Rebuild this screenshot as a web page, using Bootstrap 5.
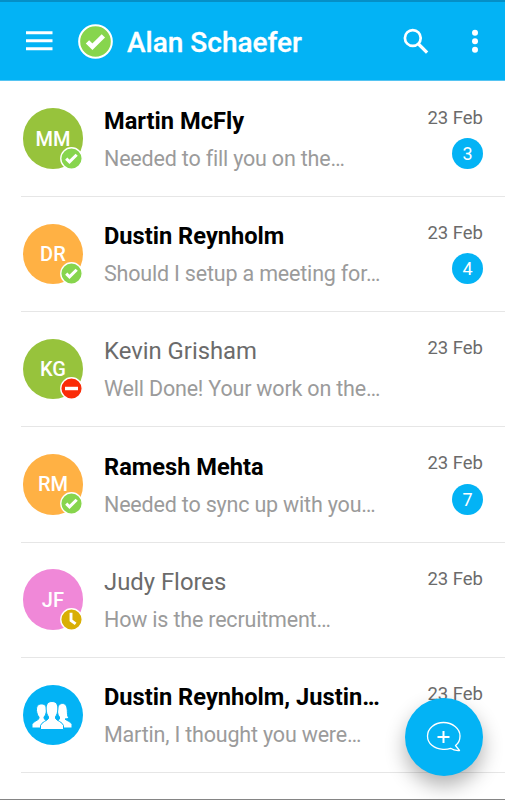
<!DOCTYPE html>
<html lang="en">
<head>
<meta charset="utf-8">
<meta name="viewport" content="width=device-width, initial-scale=1">
<title>Messages</title>
<link href="https://cdn.jsdelivr.net/npm/bootstrap@5.3.0/dist/css/bootstrap.min.css" rel="stylesheet">
<style>
:root{--sky:#03b3f5}
body{font-family:Roboto,"Noto Sans",sans-serif;background:#fff}
svg{display:block;flex:none}
.screen{width:505px;height:800px;border-bottom:1px solid #858585}
.topbar{height:81px;background:var(--sky);border-top:2px solid #058fc6;border-bottom:1px solid #55c4f2;padding:0 18px 0 26px}
.topbar h1{font-size:28px;font-weight:500;line-height:34px;letter-spacing:0;margin:4px 0 0 14px;-webkit-text-stroke:.3px #fff}
.status{margin:1px 0 0 25px}
.more{margin-left:34px}
.chats{padding-top:.6px}
.chat{height:115.25px;padding:0 22px 0 .5px;margin-left:21px;border-bottom:1px solid #e6e6e6}
.avatar{width:60.5px;height:60.5px;margin:26.7px 0 0 1.2px;font-size:20px;font-weight:500}
.green{background:#97c33c}.orange{background:#ffb144}.pink{background:#f088d8}.blue{background:var(--sky)}
.presence{right:0;bottom:-.8px}
.copy{margin:23.4px 0 0 20.8px}
.name{font-size:23.85px;line-height:32px;color:#6b6b6b}
.unread .name{font-size:23.65px;font-weight:700;color:#000}
.snippet{font-size:21.5px;letter-spacing:-.19px;font-variant-ligatures:common-ligatures;line-height:28px;color:#9b9b9b;margin-top:8px}
.side{margin-top:24px}
.date{font-size:18.5px;line-height:24px;color:#6b6b6b}
.count{width:31px;height:31px;font-size:18px;margin-top:8.5px}
.group-icon{margin:3px 2px 0 0}
.compose{right:22px;bottom:23px;width:78.5px;height:78.5px;box-shadow:0 10px 20px rgba(0,0,0,.3)}
</style>
<script src="https://cdn.jsdelivr.net/npm/bootstrap@5.3.0/dist/js/bootstrap.bundle.min.js"></script>
</head>
<body>
<svg width="0" height="0" class="position-absolute" aria-hidden="true">
<symbol id="ok" viewBox="0 0 24 24"><circle cx="12" cy="12" r="11.2" fill="#87d54d" stroke="#fff" stroke-width="1.4"/><path d="M6.5 12.2l3.4 3.4 7.5-7.5" fill="none" stroke="#fff" stroke-width="3.2"/></symbol>
<symbol id="busy" viewBox="0 0 24 24"><circle cx="12" cy="12" r="11.2" fill="#fa2c08" stroke="#fff" stroke-width="1.4"/><path d="M5.2 12h13.6" stroke="#fff" stroke-width="3.6"/></symbol>
<symbol id="away" viewBox="0 0 24 24"><circle cx="12" cy="12" r="11.2" fill="#d9af05" stroke="#fff" stroke-width="1.4"/><path d="M11.5 5v8l4.8 3.6" fill="none" stroke="#fff" stroke-width="3"/></symbol>
</svg>
<div class="screen position-relative overflow-hidden">
<header class="topbar d-flex align-items-center text-white">
<svg width="27" height="20" viewBox="0 0 27 20"><path d="M0 1.7h26.5M0 9.8h26.5M0 17.8h26.5" stroke="#fff" stroke-width="2.9"/></svg>
<svg class="status" width="35" height="35"><use href="#ok"/></svg>
<h1 class="flex-grow-1 text-nowrap">Alan Schaefer</h1>
<svg width="26" height="26" viewBox="0 0 26 26"><circle cx="9.8" cy="10" r="7.9" fill="none" stroke="#fff" stroke-width="2.7"/><path d="M15.5 16l8.6 8.6" stroke="#fff" stroke-width="3.2"/></svg>
<svg class="more" width="24" height="26" viewBox="0 0 24 26" fill="#fff"><circle cx="12" cy="4.8" r="3"/><circle cx="12" cy="13.3" r="3"/><circle cx="12" cy="21.7" r="3"/></svg>
</header>
<main class="chats">
<article class="chat unread d-flex">
<div class="avatar green rounded-circle position-relative d-flex align-items-center justify-content-center text-white flex-shrink-0">MM<svg class="presence position-absolute" width="23" height="23"><use href="#ok"/></svg></div>
<div class="copy flex-grow-1 text-nowrap"><div class="name">Martin McFly</div><div class="snippet">Needed to fill you on the…</div></div>
<div class="side d-flex flex-column align-items-end text-nowrap"><div class="date">23 Feb</div><span class="count blue rounded-circle d-flex align-items-center justify-content-center text-white">3</span></div>
</article>
<article class="chat unread d-flex">
<div class="avatar orange rounded-circle position-relative d-flex align-items-center justify-content-center text-white flex-shrink-0">DR<svg class="presence position-absolute" width="23" height="23"><use href="#ok"/></svg></div>
<div class="copy flex-grow-1 text-nowrap"><div class="name">Dustin Reynholm</div><div class="snippet">Should I setup a meeting for…</div></div>
<div class="side d-flex flex-column align-items-end text-nowrap"><div class="date">23 Feb</div><span class="count blue rounded-circle d-flex align-items-center justify-content-center text-white">4</span></div>
</article>
<article class="chat d-flex">
<div class="avatar green rounded-circle position-relative d-flex align-items-center justify-content-center text-white flex-shrink-0">KG<svg class="presence position-absolute" width="23" height="23"><use href="#busy"/></svg></div>
<div class="copy flex-grow-1 text-nowrap"><div class="name">Kevin Grisham</div><div class="snippet">Well Done! Your work on the…</div></div>
<div class="side text-nowrap"><div class="date">23 Feb</div></div>
</article>
<article class="chat unread d-flex">
<div class="avatar orange rounded-circle position-relative d-flex align-items-center justify-content-center text-white flex-shrink-0">RM<svg class="presence position-absolute" width="23" height="23"><use href="#ok"/></svg></div>
<div class="copy flex-grow-1 text-nowrap"><div class="name">Ramesh Mehta</div><div class="snippet">Needed to sync up with you…</div></div>
<div class="side d-flex flex-column align-items-end text-nowrap"><div class="date">23 Feb</div><span class="count blue rounded-circle d-flex align-items-center justify-content-center text-white">7</span></div>
</article>
<article class="chat d-flex">
<div class="avatar pink rounded-circle position-relative d-flex align-items-center justify-content-center text-white flex-shrink-0">JF<svg class="presence position-absolute" width="23" height="23"><use href="#away"/></svg></div>
<div class="copy flex-grow-1 text-nowrap"><div class="name">Judy Flores</div><div class="snippet">How is the recruitment…</div></div>
<div class="side text-nowrap"><div class="date">23 Feb</div></div>
</article>
<article class="chat unread d-flex">
<div class="avatar blue rounded-circle d-flex align-items-center justify-content-center flex-shrink-0">
<svg class="group-icon" width="40" height="30" viewBox="0 0 40 30" fill="#fff" stroke="#03b3f5" stroke-width="1"><path d="M0 27v-3.5c1-3 6-4 7-6v-1.5C5.5 14.5 4.8 12 4.5 9.5 4.2 5 6.2 3 9.5 3s5.3 2 5 6.5c-.3 2.5-1 5-2.5 6.5v1.5c1 2 6 3 7 6V27z"/><path d="M40 27v-3.5c-1-3-6-4-7-5.5 2-.3 3.5-.7 3.5-1.5-1.300-2-1-4-1.200-7C35 5 33.500 2.500 30.500 2.500S25.500 5 25.500 9.500c0 3 .7 5 2 6.500v2c-1 2-6 3-7 6v3z"/><path d="M8.500 28.500v-4c1-3.500 7-5 8-7V15.500c-1.500-1.500-2-4-2.300-6.500C13.700 3.200 16 .5 20 .5s6.300 2.700 5.800 8.500c-.3 2.500-.8 5-2.300 6.500v2c1 2 7 3.500 8 7v4z"/></svg>
</div>
<div class="copy flex-grow-1 text-nowrap"><div class="name">Dustin Reynholm, Justin…</div><div class="snippet">Martin, I thought you were…</div></div>
<div class="side text-nowrap"><div class="date">23 Feb</div></div>
</article>
</main>
<button type="button" class="compose blue btn p-0 border-0 rounded-circle position-absolute d-flex align-items-center justify-content-center" aria-label="New message">
<svg width="36" height="32" viewBox="0 0 36 32" fill="none" stroke="#fff"><path d="M29.500 24.500l4 5c-4 .3-6.500-.4-9-2.200-2.500 1-5 1.200-7.500 1C8 28 1.500 22.500 1.500 15S8.500 1.500 17.500 1.500 34 7.500 34 15c0 4-1.700 7.500-4.500 9.500z" stroke-width="1.3" stroke-linejoin="round"/><path d="M11.500 16h12M17.500 10v12" stroke-width="2"/></svg>
</button>
</div>
</body>
</html>
